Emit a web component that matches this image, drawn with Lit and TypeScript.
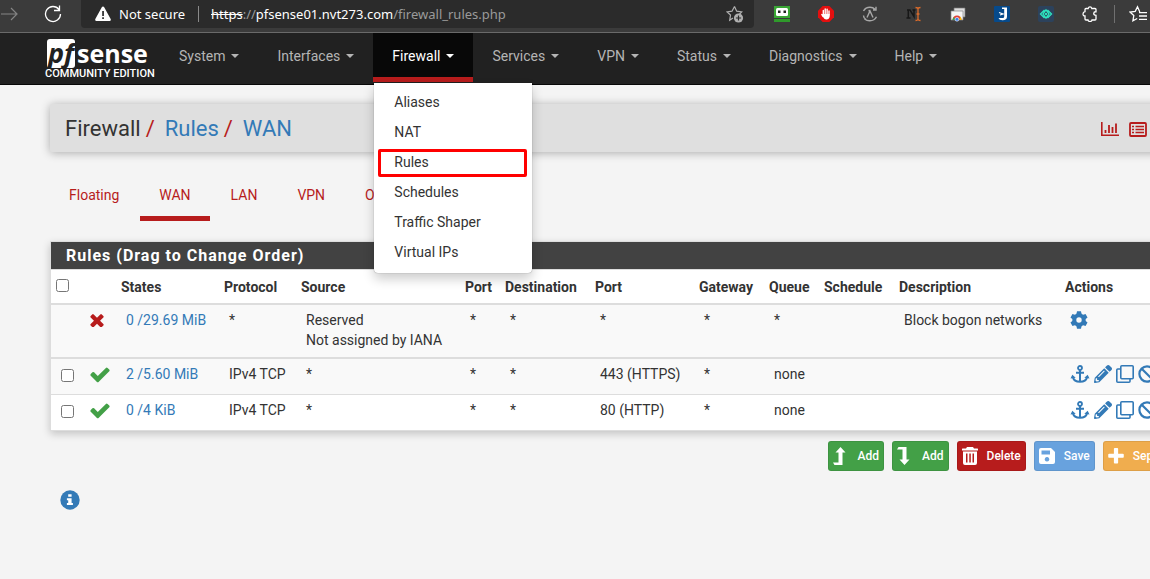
import { LitElement, html, css, svg, nothing } from "lit";
import { customElement, property } from "lit/decorators.js";
import { classMap } from "lit/directives/class-map.js";

const glyphs: Record<string, { box: string; body: unknown }> = {
  forward: { box: "0 0 18 18", body: svg`<path d="M1 9h15M11 3l6 6-6 6" fill="none" stroke="currentColor" stroke-width="1.2"/>` },
  reload: { box: "0 0 18 18", body: svg`<path d="M15 4.500A7.500 7.500 0 1 0 16.500 9M15.500.5v5h-5.500" fill="none" stroke="currentColor" stroke-width="1.300"/>` },
  warning: { box: "0 0 18 18", body: svg`<path d="M9 1.500Q9.800 1.500 10.200 2.300L16.800 14.300Q17.200 16 15.700 16H2.300Q.8 16 1.200 14.300L7.800 2.300Q8.200 1.500 9 1.500z" fill="currentColor"/><path d="M8.200 6h1.700v5H8.200zM8.200 12.200h1.700v1.700H8.200z" fill="#2b2b2b"/>` },
  starplus: { box: "0 0 18 18", body: svg`<path d="M8.500 1.500l2.200 4.700 5 .7-2.500 2.600M7 13l-3.300 2.300.8-5.200L1 6.900l5-.7 2.500-4.700" fill="none" stroke="currentColor" stroke-width="1.200"/><circle cx="12.500" cy="13" r="4.600" fill="currentColor"/><path d="M12.500 10.400v5.200M9.900 13h5.200" stroke="#2b2b2b" stroke-width="1.200"/>` },
  robot: { box: "0 0 16 16", body: svg`<path d="M0 0h16v12H0z" fill="#3aa535"/><rect x="2" y="2" width="12" height="8" rx="1.500" fill="#fff"/><path d="M4 4.500h2.500v2.500H4zM9.500 4.500H12v2.500H9.500z" fill="#222"/><path d="M0 13h16v3H0z" fill="#2f9a2b"/>` },
  hand: { box: "0 0 16 16", body: svg`<path d="M4.700 0h6.600L16 4.700v6.600L11.300 16H4.700L0 11.300V4.700z" fill="#e40f0f"/><path d="M5.300 9V4.500M7.200 8V3M9.100 8V3.300M11 9V5M5 10.500L3.800 8.500" stroke="#fff" stroke-width="1.400" stroke-linecap="round"/><path d="M4.600 8h7.100v2.500q-.5 3-3.200 3-2.500 0-3.900-3.500z" fill="#fff"/>` },
  lambda: { box: "0 0 16 16", body: svg`<path d="M1.500 5Q3.500 1.200 8 1.200q3 0 5 2M2.500 13Q5 15 8 14.800q4.500 0 6.500-4M14 .8v3.200h-3M1.500 9.500Q1.500 12 4 13.500M5 11.500l3-6.500 3 6.500M6.500 4.500L8 5" fill="none" stroke="#a8a8a8" stroke-width="1.400"/>` },
  cursor: { box: "0 0 16 16", body: svg`<path d="M1 4h3l4 6.500V4M2.300 4v8M.5 12h4M6.500 4h3" fill="none" stroke="#171717" stroke-width="1.500"/><path d="M9.500 1.500q2.500 0 2.500 1.500v10q0 1.500-2.500 1.500M14.500 1.500Q12 1.500 12 3v10q0 1.500 2.500 1.500M10.500 8h3" fill="none" stroke="#d96b2b" stroke-width="1.300"/>` },
  store: { box: "0 0 16 16", body: svg`<path d="M4 2h11v9H4z" fill="#ddd" stroke="#777" stroke-width=".7"/><path d="M1 5h12v9H1z" fill="#f5f5f5" stroke="#888" stroke-width=".7"/><path d="M2.500 14a4.500 4.500 0 0 1 9 0z" fill="#e04335"/><path d="M2.500 14l1-3 2 3z" fill="#2fa84f"/><path d="M9 14l1.500-3.500q1 1.500 1 3.500z" fill="#fabb05"/><circle cx="7" cy="13.300" r="1.900" fill="#3b7ded" stroke="#fff" stroke-width=".6"/>` },
  jay: { box: "0 0 16 16", body: svg`<rect width="16" height="16" rx="1" fill="#064a8b"/><path d="M8 1.500h5v9q0 3.800-4.500 3.800-3.200 0-4-2.300h3.500q2.200.5 2.200-1.500V3H8z" fill="#fff"/><path d="M5 6.500l4 1.500-3 1" fill="none" stroke="#fff" stroke-width="1.200"/>` },
  diamond: { box: "0 0 16 16", body: svg`<rect width="16" height="16" rx="2" fill="#2c425c"/><path d="M6.500 4L2.500 8l4 4M9.500 4l4 4-4 4M8 3.800L5 8l3 4.200L11 8z" fill="none" stroke="#2ee6c0" stroke-width="1.300"/><circle cx="8" cy="8" r="1.200" fill="#2ee6c0"/>` },
  puzzle: { box: "0 0 16 16", body: svg`<path d="M5 2.500h1.200q.3-1.700 1.800-1.700t1.800 1.700H13q1 0 1 1v2.300q-2-.3-2.300 1.500 0 2 2.300 2V13q0 1-1 1h-3q-.2 1.500-2 1.500T6 14H4q-1 0-1-1v-3Q1 10 1 8t2-2.300V3.500q0-1 1-1z" fill="none" stroke="currentColor" stroke-width="1.300"/>` },
  starlist: { box: "0 0 18 18", body: svg`<path d="M10.800 7L8.500 1.700 6.200 6.300 1 7l3.800 3.600-.9 5.200 4.300-2.300M10 7.700h8M10 11h8M10 14.300h8" fill="none" stroke="currentColor" stroke-width="1.300"/>` },
  times: { box: "270 270 1252 1252", body: svg`<path fill="currentColor" d="M1490 1322q0 40-28 68l-136 136q-28 28-68 28t-68-28l-294-294-294 294q-28 28-68 28t-68-28l-136-136q-28-28-28-68t28-68l294-294-294-294q-28-28-28-68t28-68l136-136q28-28 68-28t68 28l294 294 294-294q28-28 68-28t68 28l136 136q28 28 28 68t-28 68l-294 294 294 294q28 28 28 68z"/>` },
  check: { box: "100 210 1592 1372", body: svg`<path fill="currentColor" d="M1671 566q0 40-28 68l-724 724-136 136q-28 28-68 28t-68-28l-136-136-362-362q-28-28-28-68t28-68l136-136q28-28 68-28t68 28l294 295 656-657q28-28 68-28t68 28l136 136q28 28 28 68z"/>` },
  gear: { box: "0 0 18 18", body: svg`<circle cx="9" cy="9" r="4.700" fill="none" stroke="currentColor" stroke-width="4"/>${[0, 60, 120].map((a) => svg`<path d="M7 .3h4l.8 4H6.200zM7 17.700h4l.8-4H6.200z" fill="currentColor" transform="rotate(${a} 9 9)"/>`)}` },
  anchor: { box: "0 0 20 18", body: svg`<circle cx="10" cy="3" r="2" fill="none" stroke="currentColor" stroke-width="1.800"/><path d="M10 5v11.500M6 7.800h8M2.800 12q1.200 4.800 7.200 4.800t7.200-4.800" fill="none" stroke="currentColor" stroke-width="2"/><path d="M.5 13.500L2.300 9.800 5.700 12.800zM19.500 13.500l-1.800-3.700-3.400 3z" fill="currentColor"/>` },
  pencil: { box: "0 0 512 512", body: svg`<path fill="currentColor" fill-rule="evenodd" d="M498 142l-46 46c-5 5-12 5-17 0L324 77c-5-5-5-12 0-17l46-46c19-19 49-19 68 0l60 60c19 19 19 49 0 68zM284 100L22 362 0 484c-3 16 11 31 28 28l122-21 262-263c5-5 5-12 0-17L301 100c-5-5-12-5-17 0zM88 424h48v36l-64 11-31-31 11-64h36zM124 340c-6-6-6-14 0-20l154-154c6-6 14-6 20 0s6 14 0 20L144 340c-6 6-14 6-20 0z"/>` },
  copy: { box: "0 0 18 18", body: svg`<rect x="4.800" y=".8" width="12.400" height="13" rx="1" fill="none" stroke="currentColor" stroke-width="1.600"/><path d="M4.500 4H1.800q-1 0-1 1v11.200q0 1 1 1H13q1 0 1-1V14" fill="none" stroke="currentColor" stroke-width="1.600"/>` },
  ban: { box: "0 0 18 18", body: svg`<circle cx="9" cy="9" r="7.600" fill="none" stroke="currentColor" stroke-width="2.200"/><path d="M3.700 3.700l10.600 10.600" stroke="currentColor" stroke-width="2.200"/>` },
  trash: { box: "0 0 16 18", body: svg`<path fill="currentColor" fill-rule="evenodd" d="M5 0h6l1 1.500h3.500q.5 0 .5.500v1.500H0V2q0-.5.500-.5H4zM1 4.500h14V16q0 2-2 2H3q-2 0-2-2zM4 6.500v9h1.500v-9zM7.300 6.500v9h1.500v-9zM10.500 6.500v9H12v-9z"/>` },
  save: { box: "0 0 16 16", body: svg`<path fill="currentColor" fill-rule="evenodd" d="M2 0h10l4 4v10q0 2-2 2H2q-2 0-2-2V2q0-2 2-2zM2.500 2.500v4h8.500v-4zM8 9a2.300 2.300 0 1 0 .01 0z"/>` },
  plus: { box: "170 130 1450 1450", body: svg`<path fill="currentColor" d="M1600 736v192q0 40-28 68t-68 28h-416v416q0 40-28 68t-68 28h-192q-40 0-68-28t-28-68v-416h-416q-40 0-68-28t-28-68v-192q0-40 28-68t68-28h416v-416q0-40 28-68t68-28h192q40 0 68 28t28 68v416h416q40 0 68 28t28 68z"/>` },
  turnup: { box: "0 0 16 18", body: svg`<path fill="currentColor" d="M7.500 0l5 5.500H9.500V18H1.500L0 15.500h5.500V5.500H2.500z"/>` },
  turndown: { box: "0 0 16 18", body: svg`<path fill="currentColor" d="M7.500 18l5-5.500H9.500V0H1.500L0 2.500h5.500v10H2.500z"/>` },
  info: { box: "0 0 20 20", body: svg`<circle cx="10" cy="10" r="9.700" fill="currentColor"/><path fill="#fff" d="M8.200 4.200h3.400v2.600H8.200zM6.900 8.200h4.700v4.900h1.300v2H6.900v-2h1.300v-2.900H6.900z"/>` },
  chart: { box: "0 0 18 14", body: svg`<path d="M.7 0v13.300H18M4.500 8V11M8 3v8M11.500 5v6M15 1.500V11" fill="none" stroke="currentColor" stroke-width="1.800"/>` },
  list: { box: "0 0 18 15", body: svg`<rect x="1" y="1" width="16" height="13" rx="1" fill="none" stroke="currentColor" stroke-width="1.800"/><path d="M3 4.500h2M6.500 4.500H15M3 7.500h2M6.500 7.500H15M3 10.500h2M6.500 10.500H15" stroke="currentColor" stroke-width="1.500"/>` },
  help: { box: "0 0 20 20", body: svg`<circle cx="10" cy="10" r="9" fill="currentColor"/><path d="M7 7.500q.5-2.500 3-2.500t3 2.500q0 1.500-3 3.500v1M10 14v2" fill="none" stroke="#dfdfdf" stroke-width="2"/>` },
};

@customElement("ui-icon")
class UiIcon extends LitElement {
  @property() name = "";
  static styles = css`
    :host { display: block; flex: none; }
    svg { display: block; width: 100%; height: 100%; }
  `;
  render() {
    const g = glyphs[this.name];
    return g ? html`<svg viewBox=${g.box} aria-hidden="true">${g.body}</svg>` : nothing;
  }
}

@customElement("browser-bar")
class BrowserBar extends LitElement {
  static styles = css`
    :host {
      display: flex; align-items: flex-start; height: 32px; overflow: hidden;
      background: #3b3b3b; border-bottom: 1px solid #6a6a6a; color: #fff;
      font-family: "Noto Sans", "Open Sans", sans-serif; font-size: 13px; line-height: 27px;
    }
    button { display: flex; align-items: center; justify-content: center; height: 27px; padding: 0; border: 0; background: none; color: #fff; flex: none; }
    .forward { width: 18px; color: #858585; margin-right: 26px; }
    .reload { width: 18px; margin-right: 19px; }
    .s18 { width: 18px; height: 18px; }
    .s16 { width: 16px; height: 16px; }
    .address { display: flex; align-items: center; width: 673px; height: 28px; box-sizing: border-box; padding: 0 10px 0 13px; background: #2b2b2b; border-radius: 0 0 4px 4px; flex: none; }
    .secure { margin-left: 7px; padding-right: 12px; margin-right: 12px; border-right: 1px solid #8a8a8a; line-height: 16px; width: 67px; white-space: nowrap; }
    .url { flex: 1; color: #9a9a9a; white-space: nowrap; }
    .host { color: #fff; }
    .bad { color: #fff; text-decoration: line-through; }
    .star { color: #b0b0b0; }
    .extensions { display: flex; gap: 28px; margin-left: 20px; flex: none; }
    .favorites { margin-left: 16px; padding-left: 14px; border-left: 1px solid #707070; height: 18px; margin-top: 5px; }
  `;
  render() {
    const ext = ["robot", "hand", "lambda", "cursor", "store", "jay", "diamond", "puzzle"];
    return html`
      <button class="forward" aria-label="Forward"><ui-icon class="s18" name="forward"></ui-icon></button>
      <button class="reload" aria-label="Reload"><ui-icon class="s18" name="reload"></ui-icon></button>
      <div class="address">
        <ui-icon class="s18" name="warning"></ui-icon>
        <span class="secure">Not secure</span>
        <span class="url"><span class="bad">https</span>://<span class="host">pfsense01.nvt273.com</span>/firewall_rules.php</span>
        <button class="star" aria-label="Add to favorites"><ui-icon class="s18" name="starplus"></ui-icon></button>
      </div>
      <div class="extensions">${ext.map((n) => html`<button aria-label=${n}><ui-icon class="s16" name=${n}></ui-icon></button>`)}</div>
      <button class="favorites" aria-label="Favorites"><ui-icon class="s18" name="starlist"></ui-icon></button>
    `;
  }
}

@customElement("main-nav")
class MainNav extends LitElement {
  static styles = css`
    :host { display: flex; height: 51px; background: #212121; border-bottom: 1px solid #080808; padding-left: 45px; font-size: 14px; }
    a { text-decoration: none; color: inherit; }
    .brand { width: 115px; flex: none; color: #fff; padding-top: 6px; }
    .logo { display: flex; height: 29px; margin-left: 2px; font-family: "Open Sans", sans-serif; font-weight: 700; }
    .pf { width: 28px; height: 29px; box-sizing: border-box; padding-left: 1px; border-radius: 3px; background: #fff; color: #212121; font-size: 27px; line-height: 27px; font-style: italic; }
    .sense { font-size: 25px; line-height: 28px; margin-left: 2px; }
    .edition { display: block; font-size: 11px; line-height: 12px; font-weight: 500; white-space: nowrap; }
    ul { list-style: none; margin: 0; padding: 0; }
    .items { display: flex; }
    .item { position: relative; color: #b5b5b5; }
    .link { display: flex; align-items: center; gap: 6px; height: 42px; padding: 2px 19px 0; border-bottom: 5px solid transparent; white-space: nowrap; }
    .caret { border: 4px solid transparent; border-top-color: currentColor; border-bottom: 0; }
    .open .link { background: #080808; border-bottom-color: #b71c1c; color: #fff; }
    .menu { position: absolute; z-index: 5; top: 50px; left: 1px; width: 158px; box-sizing: border-box; padding: 4px 0 6px; background: #fff; border-radius: 0 0 4px 4px; box-shadow: 0 0 1px rgba(0,0,0,.5), 0 6px 12px rgba(0,0,0,.2); color: #333; }
    .entry { position: relative; }
    .entry a { display: block; padding: 5px 20px; line-height: 20px; }
    .marked::after { content: ""; position: absolute; inset: 2px 5px 0 4px; border: 3px solid #f00; border-radius: 2px; pointer-events: none; }
  `;
  render() {
    const items = ["System", "Interfaces", "Firewall", "Services", "VPN", "Status", "Diagnostics", "Help"];
    const menu = ["Aliases", "NAT", "Rules", "Schedules", "Traffic Shaper", "Virtual IPs"];
    return html`
      <a class="brand" href="#"><span class="logo"><span class="pf">pf</span><span class="sense">sense</span></span><span class="edition">COMMUNITY EDITION</span></a>
      <ul class="items">
        ${items.map((t) => html`
          <li class=${classMap({ item: true, open: t === "Firewall" })}>
            <a class="link" href="#">${t}<span class="caret"></span></a>
            ${t === "Firewall" ? html`<ul class="menu">${menu.map((m) => html`<li class=${classMap({ entry: true, marked: m === "Rules" })}><a href="#">${m}</a></li>`)}</ul>` : nothing}
          </li>`)}
      </ul>
    `;
  }
}

interface Rule { ok: boolean; states: string; proto: string; source: string[]; dport: string; queue: string; desc: string; actions: string[]; }

const rules: Rule[] = [
  { ok: false, states: "0 /29.69 MiB", proto: "*", source: ["Reserved", "Not assigned by IANA"], dport: "*", queue: "*", desc: "Block bogon networks", actions: ["gear"] },
  { ok: true, states: "2 /5.60 MiB", proto: "IPv4 TCP", source: ["*"], dport: "443 (HTTPS)", queue: "none", desc: "", actions: ["anchor", "pencil", "copy", "ban"] },
  { ok: true, states: "0 /4 KiB", proto: "IPv4 TCP", source: ["*"], dport: "80 (HTTP)", queue: "none", desc: "", actions: ["anchor", "pencil", "copy", "ban"] },
];

@customElement("rules-table")
class RulesTable extends LitElement {
  static styles = css`
    :host { display: block; border: 1px solid #ddd; background: #fff; box-shadow: 0 3px 8px rgba(0,0,0,.2); }
    h2 { margin: 0; padding: 0 15px; background: #424242; color: #fff; font-size: 16px; font-weight: 700; line-height: 27px; letter-spacing: 1px; }
    table { width: 100%; table-layout: fixed; border-collapse: separate; border-spacing: 0; line-height: 20px; border-top: 1px solid #ddd; }
    th { padding: 7px 5px 6px; text-align: left; vertical-align: top; font-weight: 700; white-space: nowrap; border-bottom: 2px solid #ddd; }
    td { padding: 5px 10px 10px; vertical-align: top; white-space: nowrap; }
    .blocked td { border-bottom: 2px solid #ddd; background: #f9f9f9; padding-bottom: 7px; }
    .odd td { background: #f9f9f9; border-bottom: 1px solid #ddd; }
    .check { width: 29px; } .icon { width: 36px; } .states { width: 103px; } .proto { width: 77px; }
    .source { width: 164px; } .port { width: 40px; } .dest { width: 90px; } .dport { width: 104px; }
    .gateway { width: 70px; } .queue { width: 55px; } .schedule { width: 75px; } .desc { width: 166px; }
    input { display: block; width: 13px; height: 13px; margin: 5px 0 0; }
    th input { margin: 2px 0 0; }
    a { color: #337ab7; text-decoration: none; }
    .times { width: 14px; height: 14px; margin-top: 3px; color: #b71c1c; }
    .tick { width: 20px; height: 17px; margin-top: 2px; color: #43a047; }
    .actions { display: flex; gap: 4px; }
    .actions ui-icon { width: 18px; height: 18px; margin-top: 1px; }
    .actions .anchor { width: 20px; }
  `;
  render() {
    const cols = ["check", "icon", "states", "proto", "source", "port", "dest", "dport", "gateway", "queue", "schedule", "desc", "act"];
    const heads = ["", "States", "Protocol", "Source", "Port", "Destination", "Port", "Gateway", "Queue", "Schedule", "Description", "Actions"];
    return html`
      <h2>Rules (Drag to Change Order)</h2>
      <table>
        <colgroup>${cols.map((c) => html`<col class=${c}>`)}</colgroup>
        <thead><tr><th><input type="checkbox" aria-label="Select all"></th>${heads.map((h) => html`<th>${h}</th>`)}</tr></thead>
        <tbody>
          ${rules.map((r, i) => html`
            <tr class=${classMap({ blocked: !r.ok, odd: i === 1 })}>
              <td>${r.ok ? html`<input type="checkbox" aria-label="Select rule">` : nothing}</td>
              <td><ui-icon class=${r.ok ? "tick" : "times"} name=${r.ok ? "check" : "times"}></ui-icon></td>
              <td><a href="#">${r.states}</a></td>
              <td>${r.proto}</td>
              <td>${r.source.map((s) => html`<div>${s}</div>`)}</td>
              <td>*</td><td>*</td><td>${r.dport}</td><td>*</td><td>${r.queue}</td><td></td>
              <td>${r.desc}</td>
              <td><div class="actions">${r.actions.map((a) => html`<a href="#" aria-label=${a}><ui-icon class=${a} name=${a}></ui-icon></a>`)}</div></td>
            </tr>`)}
        </tbody>
      </table>
    `;
  }
}

@customElement("app-root")
class AppRoot extends LitElement {
  static styles = css`
    :host { display: block; min-height: 100vh; overflow: hidden; background: #f4f4f4; color: #333; font: 14px/20px Roboto, "Liberation Sans", sans-serif; }
    main { min-width: 1140px; margin: 19px 0 0 50px; }
    a { text-decoration: none; }
    .title { display: flex; align-items: center; justify-content: space-between; height: 48px; padding: 0 16px 0 15px; background: #dfdfdf; border-radius: 2px; box-shadow: 0 1px 10px rgba(0,0,0,.3); }
    h1 { display: flex; gap: 5px; margin: 0; padding-top: 2px; font-size: 22px; font-weight: 400; line-height: 24px; }
    h1 a { color: #337ab7; margin-left: 5px; }
    .sep { color: #b71c1c; }
    .tools { display: flex; align-items: center; gap: 10px; padding-top: 2px; color: #b71c1c; }
    .tools a { color: inherit; }
    .chart { width: 18px; height: 14px; } .list { width: 18px; height: 15px; } .help { width: 17px; height: 17px; }
    .tabs { display: flex; gap: 2px; margin: 20px 0; }
    .tab { padding: 13px 19px 11px; border-bottom: 5px solid transparent; color: #b71c1c; }
    .active { border-color: #b71c1c; }
    .buttons { display: flex; justify-content: flex-end; gap: 8px; margin-top: 10px; }
    .btn { display: flex; align-items: center; gap: 9px; height: 30px; padding: 0 4px; border: 1px solid rgba(0,0,0,.08); border-radius: 3px; color: #fff; font: 500 12px/18px Roboto, sans-serif; white-space: nowrap; }
    .green { background: #43a047; } .red { background: #b71c1c; } .blue { background: #68a2de; } .orange { background: #f0ad4e; }
    .btn ui-icon { width: 16px; height: 16px; }
    .btn .tall { height: 18px; }
    .info { display: block; width: 20px; height: 20px; margin: 19px 10px; padding: 0; border: 0; background: none; color: #337ab7; }
  `;
  render() {
    const tabs = ["Floating", "WAN", "LAN", "VPN", "OpenVPN"];
    const buttons = [
      ["green", "turnup", "Add"], ["green", "turndown", "Add"], ["red", "trash", "Delete"], ["blue", "save", "Save"], ["orange", "plus", "Separator"],
    ];
    return html`
      <browser-bar></browser-bar>
      <main-nav></main-nav>
      <main>
        <header class="title">
          <h1><span>Firewall</span><span class="sep">/</span><a href="#">Rules</a><span class="sep">/</span><a href="#">WAN</a></h1>
          <div class="tools">${["chart", "list", "help"].map((n) => html`<a href="#" aria-label=${n}><ui-icon class=${n} name=${n}></ui-icon></a>`)}</div>
        </header>
        <nav class="tabs">${tabs.map((t) => html`<a href="#" class=${classMap({ tab: true, active: t === "WAN" })}>${t}</a>`)}</nav>
        <rules-table></rules-table>
        <div class="buttons">
          ${buttons.map(([tone, icon, label]) => html`<button class="btn ${tone}"><ui-icon class=${icon === "save" || icon === "plus" ? "" : "tall"} name=${icon}></ui-icon>${label}</button>`)}
        </div>
        <button class="info" aria-label="Information"><ui-icon name="info"></ui-icon></button>
      </main>
    `;
  }
}
